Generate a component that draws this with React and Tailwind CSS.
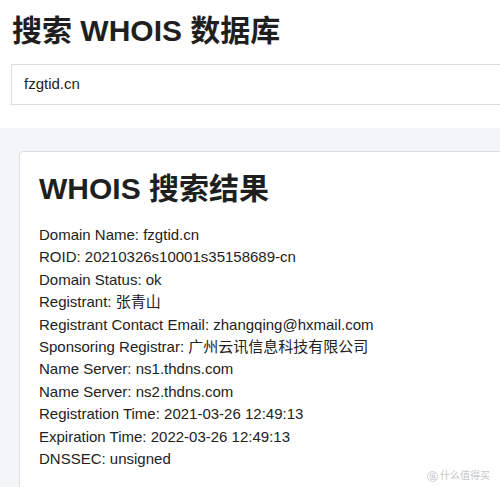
export default function App() {
  const font = { fontFamily: '"Liberation Sans", "Noto Sans CJK SC", Arial, sans-serif' };
  const lines = [
    "Domain Name: fzgtid.cn",
    "ROID: 20210326s10001s35158689-cn",
    "Domain Status: ok",
    "Registrant: 张青山",
    "Registrant Contact Email: zhangqing@hxmail.com",
    "Sponsoring Registrar: 广州云讯信息科技有限公司",
    "Name Server: ns1.thdns.com",
    "Name Server: ns2.thdns.com",
    "Registration Time: 2021-03-26 12:49:13",
    "Expiration Time: 2022-03-26 12:49:13",
    "DNSSEC: unsigned",
  ];
  return (
    <div className="relative w-[500px] h-[487px] overflow-hidden bg-white text-[#1f1f1f] font-['Liberation_Sans','Noto_Sans_CJK_SC',sans-serif]">
      <div className="pl-[12px] pt-[13px] pb-[23px]">
        <h1 className="text-[30px] leading-[36px] font-bold whitespace-nowrap">搜索 WHOIS 数据库</h1>
        <div className="mt-[15px] ml-[-1px] w-[520px] h-[41px] border border-[#d9dee2] bg-white flex items-center pl-[12px] text-[15px] text-[#222]">
          fzgtid.cn
        </div>
      </div>
      <div className="bg-[#f4f5f6] pt-[23px] pl-[19px] h-[400px]">
        <div className="w-[520px] h-[400px] bg-white border border-[#dcdfe3] rounded-[4px] pl-[19px] pt-[19px]">
          <h2 className="text-[30px] leading-[36px] font-bold whitespace-nowrap">WHOIS 搜索结果</h2>
          <div className="mt-[17px] text-[15px] leading-[22.4px] text-[#222]">
            {lines.map((l) => (
              <div key={l} className="whitespace-nowrap">{l}</div>
            ))}
          </div>
        </div>
      </div>
      <div className="absolute right-[10px] bottom-[5px] flex items-center gap-[2px] text-[10px] leading-[12px] text-[#c8c8c8]">
        <span className="w-[11px] h-[11px] rounded-full border border-[#cfcfcf] flex items-center justify-center text-[7px] leading-none">值</span>
        <span>什么值得买</span>
      </div>
    </div>
  );
}
